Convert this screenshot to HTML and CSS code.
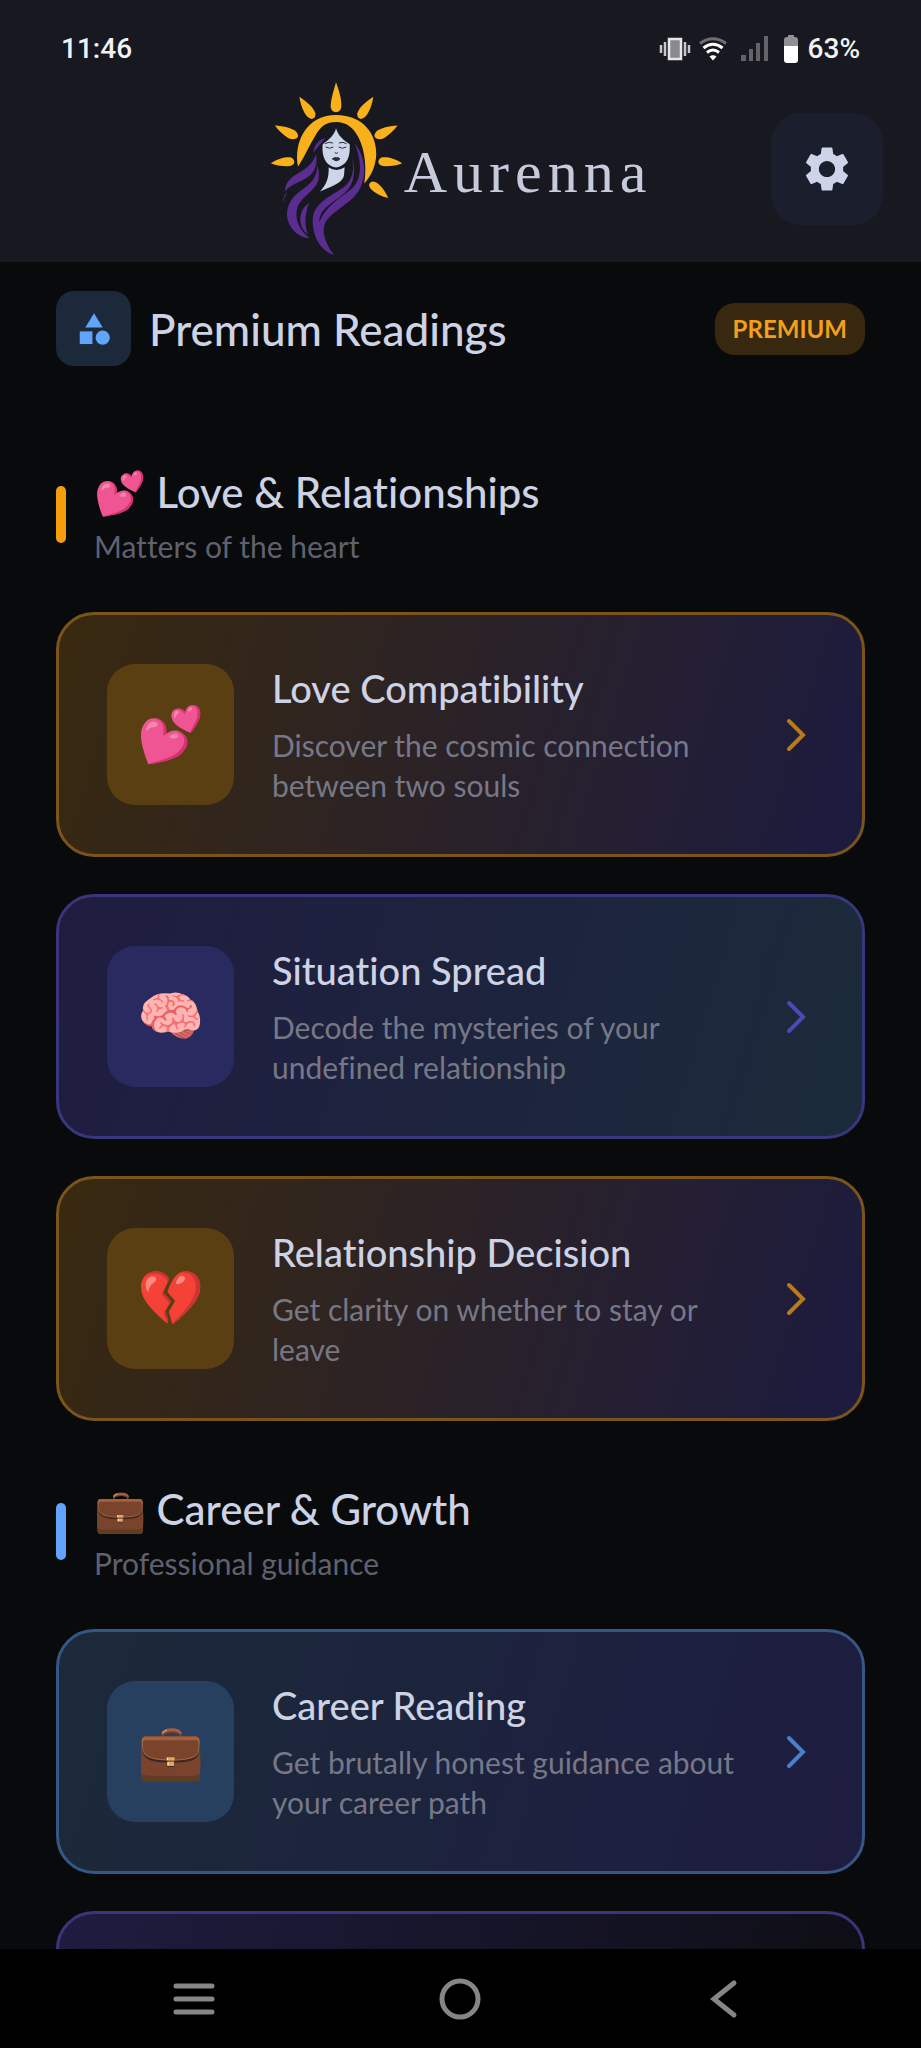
FILE: index.html
```html
<!DOCTYPE html>
<html lang="en">
<head>
<meta charset="utf-8">
<meta name="viewport" content="width=device-width, initial-scale=1">
<title>Aurenna – Premium Readings</title>
<link rel="stylesheet" href="styles.css">
</head>
<body>
<div class="app">
  <header class="header">
    <div class="status">
      <span class="status-time">11:46</span>
      <div class="status-right">
        <svg width="32" height="24" viewBox="0 0 32 24" aria-label="Vibrate">
          <rect x="10" y="2" width="12" height="20" fill="#8a8a8e" stroke="#e6e6ea" stroke-width="2.5"/>
          <path d="M6 5v14M26 5v14M2 8v8M30 8v8" stroke="#c8c8cc" stroke-width="2.5"/>
        </svg>
        <svg class="wifi" width="28" height="24" viewBox="0 0 28 24" aria-label="Wi-Fi" fill="none" stroke="#fff" stroke-width="3">
          <path d="M1 6.500Q14-3 27 6.500" stroke="#6e6e74"/>
          <path d="M4.500 11Q14 3.500 23.500 11"/>
          <path d="M8 15.500Q14 10.500 20 15.500"/>
          <path d="M14 23.500l-3.500-4q3.500-2.500 7 0z" fill="#fff" stroke="none"/>
        </svg>
        <svg class="signal" width="28" height="26" viewBox="0 0 28 26" aria-label="Mobile signal" fill="#626268">
          <rect x="0" y="19" width="5" height="6"/><rect x="8" y="13" width="4" height="12"/><rect x="15" y="7" width="4" height="18"/><rect x="23" y="0" width="4" height="25"/>
        </svg>
        <svg class="battery" width="16" height="30" viewBox="0 0 16 30" aria-label="Battery">
          <path d="M5 1h6v2h1q3 0 3 3v6H1V6q0-3 3-3h1z" fill="#909094"/>
          <path d="M1 12h14v14q0 3-3 3H4q-3 0-3-3z" fill="#fff"/>
        </svg>
        <span class="status-percent">63%</span>
      </div>
    </div>
    <div class="brand-row">
      <div class="brand">
        <svg class="brand-mark" viewBox="45 15 405 535" aria-hidden="true">
          <g fill="#f8b11c">
            <path d="M246 22C256 50 264 75 262 96Q260 111 246 112Q232 111 230 96C230 75 238 50 246 22Z"/>
            <path d="M136 65C155 78 178 95 184 115Q186 130 173 132Q160 131 151 113C142 95 138 80 136 65Z"/>
            <path d="M358 65C339 78 316 95 310 115Q308 130 321 132Q334 131 343 113C352 95 356 80 358 65Z"/>
            <path d="M62 152C90 154 116 160 127 171Q137 183 128 190Q116 197 102 189C86 179 73 167 62 152Z"/>
            <path d="M431 152C403 154 377 160 366 171Q357 183 366 190Q378 197 391 189C407 179 420 167 431 152Z"/>
            <path d="M50 265C75 249 98 245 111 248Q123 254 120 265Q115 274 100 274C80 274 62 271 50 265Z"/>
            <path d="M445 265C420 249 397 245 383 248Q371 254 374 265Q379 274 395 274C415 274 433 271 445 265Z"/>
            <path d="M403 370C380 364 362 355 350 342Q341 328 350 322Q359 317 372 326C385 337 396 353 403 370Z"/>
            <path d="M132 275C118 205 155 120 246 120C330 120 368 180 367 238C366 275 350 305 331 326C338 280 334 230 315 190C300 160 280 141 246 141C215 141 200 155 185 180C165 212 152 245 132 275Z"/>
          </g>
          <g fill="#cdd5e8">
            <path d="M246 160C241 180 228 192 206 208C203 235 210 258 225 270Q246 286 267 270C284 258 289 235 287 208C268 195 252 182 246 160Z"/>
            <path d="M224 277Q246 294 272 277L270 302C266 320 248 330 198 350C216 330 225 312 224 277Z"/>
          </g>
          <g fill="none" stroke="#2b2c42" stroke-width="3" stroke-linecap="round">
            <path d="M216 217Q226 224 237 217M255 217Q266 224 276 217M214 206Q224 199 236 204M256 204Q268 199 277 206M243 234Q247 238 251 234"/>
            <path d="M236 252Q242 246 247 249Q252 246 258 252Q247 264 236 252Z" fill="#2b2c42"/>
          </g>
          <g fill="#5b2d91">
            <path d="M214 190C193 195 180 210 178 234C190 218 200 206 214 190Z"/>
            <path d="M186 238C175 270 150 285 125 300C105 312 92 330 93 350C112 325 150 320 170 300C186 284 190 262 186 238Z"/>
            <path d="M190 270C190 308 170 328 142 346C108 370 94 400 100 432C107 465 135 488 167 491C135 465 120 430 130 398C142 365 186 348 194 312Q196 290 190 270Z"/>
            <path d="M165 385C140 402 133 430 143 457Q149 470 162 480C150 450 152 420 165 385Z"/>
            <path d="M101 352Q86 362 87 384Q90 367 101 352Z"/>
            <path d="M294 245C303 285 295 318 268 338C230 364 180 385 176 432C174 485 200 528 240 541C218 512 202 478 212 448C228 410 290 390 316 345C344 295 330 240 302 205C324 262 325 310 295 340C262 368 215 392 196 442C195 400 240 385 272 355C303 328 306 284 294 245Z"/>
          </g>
        </svg>
        <span class="brand-name">Aurenna</span>
      </div>
      <button class="settings" type="button" aria-label="Settings">
        <svg width="54" height="54" viewBox="0 0 24 24" fill="#cdd3e8"><path d="M19.140 12.940c.040-.300.060-.610.060-.940 0-.320-.020-.640-.070-.940l2.030-1.580c.180-.140.230-.410.120-.610l-1.920-3.320c-.120-.220-.370-.290-.590-.220l-2.390.960c-.500-.380-1.030-.700-1.620-.940L14.400 2.810c-.040-.240-.240-.410-.480-.410h-3.840c-.240 0-.430.170-.470.410l-.360 2.540c-.590.240-1.130.570-1.620.940l-2.390-.960c-.220-.080-.470 0-.590.220L2.740 8.870c-.120.210-.080.470.120.610l2.030 1.580c-.050.300-.090.630-.090.940s.020.640.070.940l-2.030 1.580c-.180.140-.230.410-.120.610l1.920 3.320c.120.220.370.290.590.220l2.390-.960c.500.380 1.030.700 1.620.940l.360 2.540c.050.240.240.410.480.410h3.840c.240 0 .440-.170.470-.410l.360-2.540c.590-.240 1.130-.560 1.620-.940l2.390.960c.220.080.470 0 .590-.220l1.920-3.320c.120-.220.070-.470-.120-.610l-2.010-1.580zM12 15.600c-1.980 0-3.600-1.620-3.600-3.600s1.620-3.600 3.600-3.600 3.600 1.620 3.600 3.600-1.620 3.600-3.600 3.600z"/></svg>
      </button>
    </div>
  </header>

  <main class="content">
    <div class="page-title">
      <span class="page-icon">
        <svg width="38" height="38" viewBox="0 0 24 24" fill="#60a5fa"><path d="M12 2l-5.500 9h11z"/><circle cx="17.500" cy="17.500" r="4.500"/><path d="M3 13.500h8v8H3z"/></svg>
      </span>
      <h1 class="heading heading-page">Premium Readings</h1>
      <span class="badge">PREMIUM</span>
    </div>

    <section class="group">
      <div class="group-head amber">
        <span class="group-bar"></span>
        <div>
          <h2 class="heading"><span class="emoji">💕</span> Love &amp; Relationships</h2>
          <p class="group-sub">Matters of the heart</p>
        </div>
      </div>
      <a class="card amber" href="#love">
        <span class="tile">💕</span>
        <span class="card-text"><strong class="card-title">Love Compatibility</strong><span class="card-desc">Discover the cosmic connection between two souls</span></span>
        <svg class="chevron" viewBox="0 0 36 36"><path d="M11 4l14 14-14 14"/></svg>
      </a>
      <a class="card indigo" href="#situation">
        <span class="tile">🧠</span>
        <span class="card-text"><strong class="card-title">Situation Spread</strong><span class="card-desc">Decode the mysteries of your undefined relationship</span></span>
        <svg class="chevron" viewBox="0 0 36 36"><path d="M11 4l14 14-14 14"/></svg>
      </a>
      <a class="card amber" href="#decision">
        <span class="tile">💔</span>
        <span class="card-text"><strong class="card-title">Relationship Decision</strong><span class="card-desc">Get clarity on whether to stay or leave</span></span>
        <svg class="chevron" viewBox="0 0 36 36"><path d="M11 4l14 14-14 14"/></svg>
      </a>
    </section>

    <section class="group">
      <div class="group-head blue">
        <span class="group-bar"></span>
        <div>
          <h2 class="heading"><span class="emoji">💼</span> Career &amp; Growth</h2>
          <p class="group-sub">Professional guidance</p>
        </div>
      </div>
      <a class="card blue" href="#career">
        <span class="tile">💼</span>
        <span class="card-text"><strong class="card-title">Career Reading</strong><span class="card-desc">Get brutally honest guidance about your career path</span></span>
        <svg class="chevron" viewBox="0 0 36 36"><path d="M11 4l14 14-14 14"/></svg>
      </a>
      <div class="card dusk"><span class="tile"></span></div>
    </section>
  </main>

  <nav class="nav" aria-label="System navigation">
    <button type="button" aria-label="Recent apps"><svg width="48" height="48" viewBox="0 0 48 48"><path d="M6 11h36M6 24h36M6 37h36"/></svg></button>
    <button type="button" aria-label="Home"><svg width="48" height="48" viewBox="0 0 48 48"><circle cx="24" cy="24" r="18"/></svg></button>
    <button type="button" aria-label="Back"><svg width="48" height="48" viewBox="0 0 48 48"><path d="M31 8L11 24l20 16"/></svg></button>
  </nav>
</div>
</body>
</html>
```
FILE: styles.css
```css
* { box-sizing: border-box; margin: 0; }

body {
  background: #080a0c;
  color: #cdd2e4;
  font-family: Lato, "Open Sans", sans-serif;
  font-variant-ligatures: none;
}

button {
  border: 0;
  padding: 0;
  background: none;
  font: inherit;
  color: inherit;
}

svg { display: block; flex: none; }

.app {
  display: flex;
  flex-direction: column;
  height: 100vh;
}

/* Header */
.header {
  flex: none;
  background: #181820;
  padding-bottom: 4px;
}

.status {
  display: flex;
  justify-content: space-between;
  align-items: center;
  height: 80px;
  padding: 18px 61px 0;
  font: 500 28px/32px Roboto, sans-serif;
  color: #f2f2f5;
}

.status-right { display: flex; align-items: center; }
.wifi { margin-left: 8px; }
.signal { margin-left: 14px; }
.battery { margin: 0 9px 0 14px; }

.brand-row {
  display: grid;
  grid-template-columns: 1fr auto 1fr;
  align-items: center;
  padding: 0 38px;
}

.brand {
  grid-column: 2;
  display: flex;
  align-items: center;
}

.brand-mark { width: 135px; height: 178px; }

.brand-name {
  padding-top: 6px;
  font: 400 60px/60px "Liberation Serif", serif;
  letter-spacing: 6px;
  color: #c6cbdc;
}

.settings {
  justify-self: end;
  display: grid;
  place-items: center;
  width: 112px;
  height: 112px;
  border-radius: 30px;
  background: #1b1e2c;
}

/* Content */
.content {
  flex: 1;
  min-height: 0;
  overflow: hidden;
  padding: 29px 56px 0;
}

.heading {
  font-size: 42px;
  line-height: 52px;
  font-weight: 500;
}

.heading-page { font-size: 44px; }

.page-title {
  display: flex;
  align-items: center;
  gap: 18px;
}

.page-icon {
  display: grid;
  place-items: center;
  width: 75px;
  height: 75px;
  border-radius: 18px;
  background: #1c293a;
}

.badge {
  margin-left: auto;
  padding: 10px 18px;
  border-radius: 20px;
  background: #38280f;
  color: #f0a01c;
  font-size: 24px;
  line-height: 32px;
  font-weight: 700;
}

.group {
  display: flex;
  flex-direction: column;
  gap: 37px;
  padding-top: 62px;
}

.page-title + .group { padding-top: 100px; }

.group-head {
  display: flex;
  align-items: center;
  gap: 28px;
  padding-bottom: 13px;
}

.group-bar {
  width: 10px;
  height: 57px;
  border-radius: 5px;
  background: var(--accent);
}

.group-sub {
  padding-top: 12px;
  font-size: 30px;
  line-height: 32px;
  color: #60616f;
}

.card {
  display: flex;
  align-items: center;
  padding: 49px 48px;
  border: 3px solid var(--edge);
  border-radius: 38px;
  background: linear-gradient(107deg, var(--from), var(--to)) border-box;
  color: inherit;
  text-decoration: none;
}

.tile {
  display: grid;
  place-items: center;
  width: 127px;
  height: 141px;
  flex: none;
  padding-bottom: 4px;
  border-radius: 28px;
  background: var(--tile);
  font-size: 54px;
}

.card-text {
  flex: 1;
  display: flex;
  flex-direction: column;
  gap: 14px;
  padding: 0 16px 0 38px;
}

.card-title {
  font-size: 38px;
  line-height: 46px;
  font-weight: 500;
}

.card-desc {
  font-size: 30px;
  line-height: 40px;
  color: #767888;
}

.chevron {
  width: 36px;
  height: 36px;
  fill: none;
  stroke: var(--arrow);
  stroke-width: 4;
  stroke-linecap: round;
}

.amber { --accent: #f59e0b; --edge: #7a5419; --from: #39290f; --to: #1c1b40; --tile: #5a3f12; --arrow: #b97a1c; }
.indigo { --edge: #38367c; --from: #1f1c40; --to: #1b2b3b; --tile: #292a5f; --arrow: #4b4bb5; }
.blue { --accent: #60a5fa; --edge: #355785; --from: #1b2a3a; --to: #1e1c40; --tile: #28405f; --arrow: #4a80c8; }
.dusk { --edge: #38367c; --from: #1f1c40; --to: #0d0d12; --tile: #292a5f; }

/* System navigation */
.nav {
  flex: none;
  display: grid;
  grid-template-columns: repeat(3, 1fr);
  align-items: center;
  justify-items: center;
  height: 99px;
  padding: 0 61px;
  background: #000;
}

.nav svg {
  fill: none;
  stroke: #868686;
  stroke-width: 5;
  stroke-linecap: round;
}
```
